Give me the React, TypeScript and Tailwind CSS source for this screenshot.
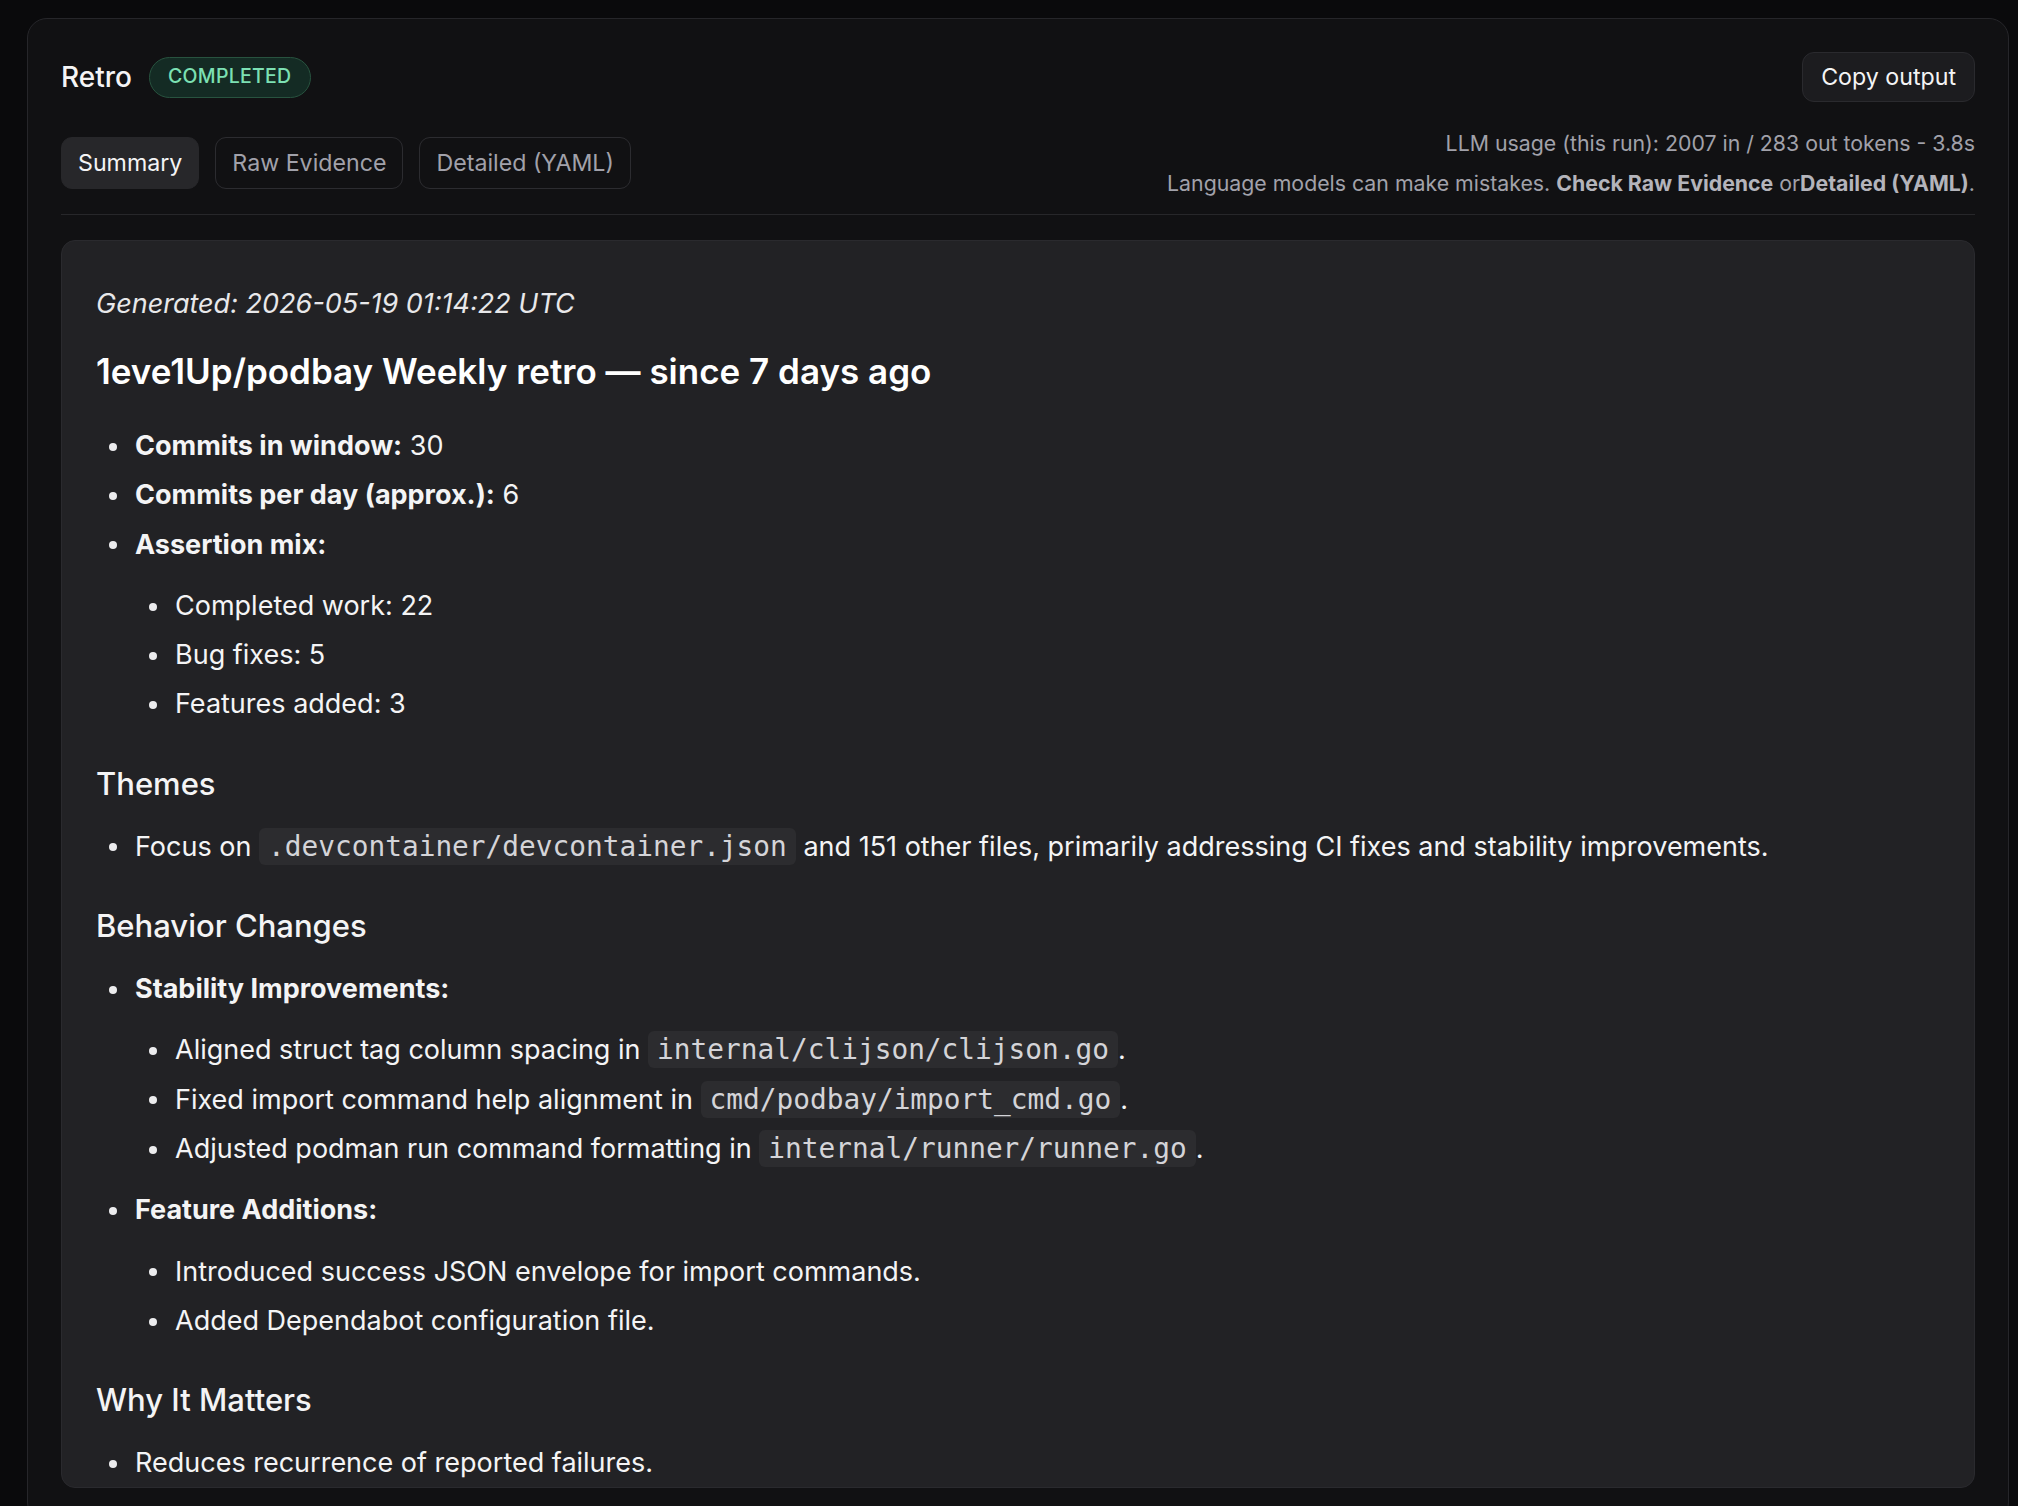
import React from "react";

type Piece = string | { code: string } | { bold: string };

interface Item {
    text: Piece[];
    children?: Item[];
}

const sans = "font-['Inter','Noto_Sans',sans-serif]";

function Inline({ parts }: { parts: Piece[] }) {
    return (
        <>
            {parts.map((p, i) => {
                if (typeof p === "string") return <span key={i}>{p}</span>;
                if ("code" in p)
                    return (
                        <code
                            key={i}
                            className="font-['DejaVu_Sans_Mono',monospace] text-[27.8px] leading-none text-[#d4d4d8] bg-[#2c2c2f] rounded-[6px] px-[9px] py-[2px]"
                        >
                            {p.code}
                        </code>
                    );
                return (
                    <strong key={i} className="font-bold">
                        {p.bold}
                    </strong>
                );
            })}
        </>
    );
}

function BulletList({ items, nested = false }: { items: Item[]; nested?: boolean }) {
    return (
        <ul className={nested ? "my-[12px] pl-[40px]" : ""}>
            {items.map((item, i) => (
                <li key={i}>
                    <div className="flex leading-[49.3px] whitespace-nowrap">
                        <span className="w-[39px] shrink-0 flex items-center">
                            <span className="ml-[13px] mt-[2px] size-[8px] rounded-full bg-[#ececee]" />
                        </span>
                        <span>
                            <Inline parts={item.text} />
                        </span>
                    </div>
                    {item.children && <BulletList items={item.children} nested />}
                </li>
            ))}
        </ul>
    );
}

const stats: Item[] = [
    { text: [{ bold: "Commits in window:" }, " 30"] },
    { text: [{ bold: "Commits per day (approx.):" }, " 6"] },
    {
        text: [{ bold: "Assertion mix:" }],
        children: [
            { text: ["Completed work: 22"] },
            { text: ["Bug fixes: 5"] },
            { text: ["Features added: 3"] },
        ],
    },
];

const themes: Item[] = [
    {
        text: [
            "Focus on ",
            { code: ".devcontainer/devcontainer.json" },
            " and 151 other files, primarily addressing CI fixes and stability improvements.",
        ],
    },
];

const behavior: Item[] = [
    {
        text: [{ bold: "Stability Improvements:" }],
        children: [
            { text: ["Aligned struct tag column spacing in ", { code: "internal/clijson/clijson.go" }, "."] },
            { text: ["Fixed import command help alignment in ", { code: "cmd/podbay/import_cmd.go" }, "."] },
            { text: ["Adjusted podman run command formatting in ", { code: "internal/runner/runner.go" }, "."] },
        ],
    },
    {
        text: [{ bold: "Feature Additions:" }],
        children: [
            { text: ["Introduced success JSON envelope for import commands."] },
            { text: ["Added Dependabot configuration file."] },
        ],
    },
];

const matters: Item[] = [{ text: ["Reduces recurrence of reported failures."] }];

export default function App() {
    const tabs = ["Summary", "Raw Evidence", "Detailed (YAML)"];

    return (
        <div className={`min-h-screen bg-[#0a0a0c] pt-[18px] ${sans}`}>
            <div className="ml-[27px] mr-[9px] rounded-[20px] border border-[#26262a] bg-[#111113] p-[33px]">
                {/* Header */}
                <div className="flex items-center justify-between h-[50px]">
                    <div className="flex items-center gap-[17px]">
                        <h2 className="text-[28px] font-medium text-[#f4f4f5]">Retro</h2>
                        <span className="h-[41px] flex items-center rounded-full border border-[#28533f] bg-[#142b24] px-[18px] text-[19.5px] font-medium tracking-[0.015em] text-[#7ce0b3]">
                            COMPLETED
                        </span>
                    </div>
                    <button className="h-[50px] rounded-[12px] border border-[#2a2a2e] bg-[#1c1c1f] px-[18px] text-[23.2px] text-[#f4f4f5]">
                        Copy output
                    </button>
                </div>

                {/* Tabs + usage */}
                <div className="mt-[21px] pb-[11px] border-b border-[#27272a] flex items-center justify-between">
                    <div className="flex gap-[16px]">
                        {tabs.map((t, i) => (
                            <button
                                key={t}
                                className={`h-[52px] rounded-[11px] border px-[16px] text-[23.2px] ${
                                    i === 0
                                        ? "border-[#27272a] bg-[#27272a] text-[#f4f4f5]"
                                        : "border-[#2c2c30] text-[#a1a1aa]"
                                }`}
                            >
                                {t}
                            </button>
                        ))}
                    </div>
                    <div className="text-right text-[21.3px] leading-[40px] text-[#a1a1aa]">
                        <p>LLM usage (this run): 2007 in / 283 out tokens - 3.8s</p>
                        <p>
                            Language models can make mistakes.{" "}
                            <strong className="font-bold text-[#b4b4bb]">Check Raw Evidence</strong> or
                            <strong className="font-bold text-[#b4b4bb]">Detailed (YAML)</strong>.
                        </p>
                    </div>
                </div>

                {/* Output */}
                <div className="mt-[25px] h-[1248px] overflow-hidden rounded-[14px] border border-[#2a2a2e] bg-[#222225] px-[34px] pt-[43px] text-[27px] text-[#f4f4f5]">
                    <p className="italic leading-[40px] text-[#e8e8ea]">Generated: 2026-05-19 01:14:22 UTC</p>
                    <h1 className="mt-[25px] mb-[28px] text-[35px] leading-[44px] font-semibold text-white">
                        1eve1Up/podbay Weekly retro — since 7 days ago
                    </h1>
                    <BulletList items={stats} />

                    <h3 className="mt-[34px] mb-[17px] text-[31px] leading-[42px] font-medium">Themes</h3>
                    <BulletList items={themes} />

                    <h3 className="mt-[34px] mb-[17px] text-[31px] leading-[42px] font-medium">Behavior Changes</h3>
                    <BulletList items={behavior} />

                    <h3 className="mt-[34px] mb-[17px] text-[31px] leading-[42px] font-medium">Why It Matters</h3>
                    <BulletList items={matters} />
                </div>
            </div>
        </div>
    );
}
